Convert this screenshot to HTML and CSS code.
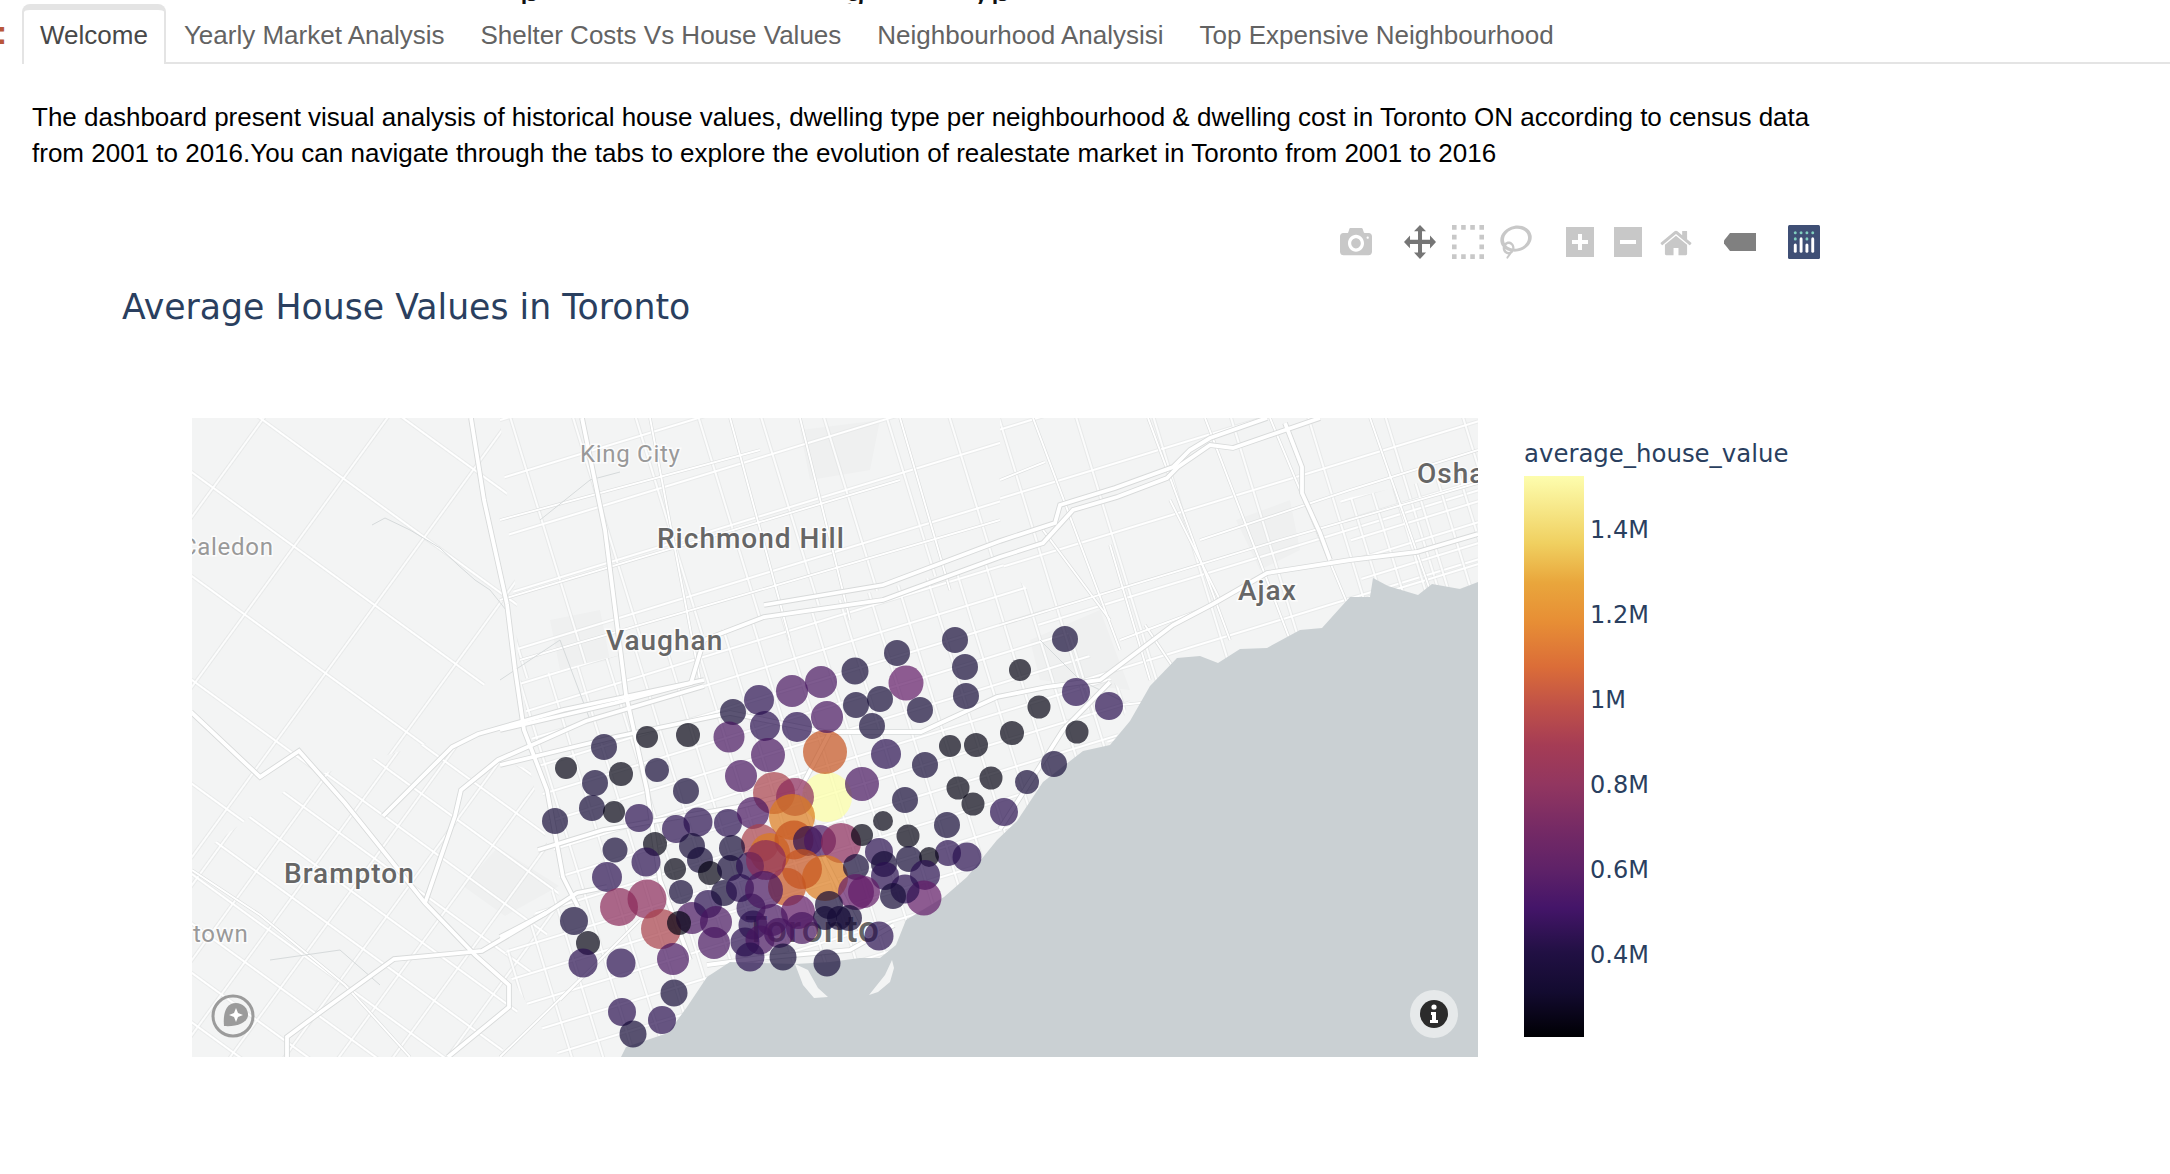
FILE: index.html
```html
<!DOCTYPE html>
<html lang="en">
<head>
<meta charset="utf-8">
<title>Toronto Dashboard</title>
<link rel="stylesheet" href="styles.css">
</head>
<body>
<div class="cut-heading"><span class="g1">p</span><span class="g2">g</span><span class="g3">y</span><span class="g4">p</span></div>
<nav class="tabs">
  <span class="edge-mark">:</span>
  <a class="tab active">Welcome</a>
  <a class="tab">Yearly Market Analysis</a>
  <a class="tab">Shelter Costs Vs House Values</a>
  <a class="tab">Neighbourhood Analysisi</a>
  <a class="tab">Top Expensive Neighbourhood</a>
</nav>
<p class="intro">The dashboard present visual analysis of historical house values, dwelling type per neighbourhood &amp; dwelling cost in Toronto ON according to census data from 2001 to 2016.You can navigate through the tabs to explore the evolution of realestate market in Toronto from 2001 to 2016</p>
<div class="toolbar">
  <div class="tb-group">
    <svg class="tb idle" viewBox="0 -50 1000 1000" preserveAspectRatio="none"><path transform="matrix(1 0 0 -1 0 788)" d="m500 450c-83 0-150-67-150-150 0-83 67-150 150-150 83 0 150 67 150 150 0 83-67 150-150 150z m400 150h-120c-16 0-34 13-39 29l-31 93c-6 15-23 28-40 28h-340c-16 0-34-13-39-28l-31-94c-6-15-23-28-40-28h-120c-55 0-100-45-100-100v-450c0-55 45-100 100-100h800c55 0 100 45 100 100v450c0 55-45 100-100 100z m-400-550c-138 0-250 112-250 250 0 138 112 250 250 250 138 0 250-112 250-250 0-138-112-250-250-250z m365 380c-19 0-35 16-35 35 0 19 16 35 35 35 19 0 35-16 35-35 0-19-16-35-35-35z"/></svg>
  </div>
  <div class="tb-group">
    <svg class="tb on" viewBox="0 -150 1000 1000" preserveAspectRatio="none"><path transform="matrix(1 0 0 -1 0 700)" d="m1000 350l-187 188 0-125-250 0 0 250 125 0-188 187-187-187 125 0 0-250-250 0 0 125-188-188 186-187 0 125 252 0 0-250-125 0 187-188 188 188-125 0 0 250 250 0 0-126 187 188z"/></svg>
    <svg class="tb idle" viewBox="0 0 1000 1000" preserveAspectRatio="none"><path transform="matrix(1 0 0 -1 0 850)" d="m0 850l0-143 143 0 0 143-143 0z m286 0l0-143 143 0 0 143-143 0z m285 0l0-143 143 0 0 143-143 0z m286 0l0-143 143 0 0 143-143 0z m-857-286l0-143 143 0 0 143-143 0z m857 0l0-143 143 0 0 143-143 0z m-857-285l0-143 143 0 0 143-143 0z m857 0l0-143 143 0 0 143-143 0z m-857-286l0-143 143 0 0 143-143 0z m286 0l0-143 143 0 0 143-143 0z m285 0l0-143 143 0 0 143-143 0z m286 0l0-143 143 0 0 143-143 0z"/></svg>
    <svg class="tb idle" viewBox="0 -150 1031 1000" preserveAspectRatio="none"><path transform="matrix(1 0 0 -1 0 700)" d="m1018 538c-36 207-290 336-568 286-277-48-473-256-436-463 10-57 36-108 76-151-13-66 11-137 68-183 34-28 75-41 114-42l-55-70 0 0c-2-1-3-2-4-3-10-14-8-34 5-45 14-11 34-8 45 4 1 1 2 3 2 5l0 0 113 140c16 11 31 24 45 40 4 3 6 7 8 11 48-3 100 0 151 9 278 48 473 255 436 462z m-624-379c-80 14-149 48-197 96 42 42 109 47 156 9 33-26 47-66 41-105z m-187-74c-19 16-33 37-39 60 50-32 109-55 174-68-42-25-95-24-135 8z m360 75c-34-7-69-9-102-8 8 62-16 128-68 170-73 59-175 54-244-5-9 20-16 40-20 61-28 159 121 317 333 354s407-60 434-217c28-159-121-318-333-355z"/></svg>
  </div>
  <div class="tb-group">
    <svg class="tb idle" viewBox="0 0 32 34"><path fill-rule="evenodd" d="M2 2H30V32H2Z M14 9V15H8V19H14V25H18V19H24V15H18V9Z"/></svg>
    <svg class="tb idle" viewBox="0 0 32 34"><path fill-rule="evenodd" d="M2 2H30V32H2Z M8 15V19H24V15Z"/></svg>
    <svg class="tb idle" viewBox="0 0 928.6 1000" preserveAspectRatio="none"><path transform="matrix(1 0 0 -1 0 880)" d="m786 296v-267q0-15-11-26t-25-10h-214v214h-143v-214h-214q-15 0-25 10t-11 26v267q0 1 0 2t0 2l321 264 321-264q1-1 1-4z m124 39l-34-41q-5-5-12-6h-2q-7 0-12 3l-386 322-386-322q-7-4-13-4-7 2-12 7l-35 41q-4 5-3 13t6 12l401 334q18 15 42 15t43-15l136-114v109q0 8 5 13t13 5h107q8 0 13-5t5-13v-227l122-102q5-5 6-12t-4-13z"/></svg>
  </div>
  <div class="tb-group">
    <svg class="tb tag" viewBox="0 0 32 34"><path d="M6 8H32V26H6L0 18.5V15.5Z"/></svg>
  </div>
  <div class="tb-group">
    <svg class="tb" viewBox="0 0 132 132" preserveAspectRatio="none"><rect class="logo-bg" width="132" height="132" rx="6"/><g class="logo-dots"><circle cx="78" cy="54" r="6"/><circle cx="102" cy="30" r="6"/><circle cx="78" cy="30" r="6"/><circle cx="54" cy="30" r="6"/><circle cx="30" cy="30" r="6"/><circle cx="30" cy="54" r="6"/></g><g class="logo-bars"><path d="M30,72a6,6,0,0,0-6,6v24a6,6,0,0,0,12,0V78A6,6,0,0,0,30,72Z"/><path d="M78,72a6,6,0,0,0-6,6v24a6,6,0,0,0,12,0V78A6,6,0,0,0,78,72Z"/><path d="M54,48a6,6,0,0,0-6,6v48a6,6,0,0,0,12,0V54A6,6,0,0,0,54,48Z"/><path d="M102,48a6,6,0,0,0-6,6v48a6,6,0,0,0,12,0V54A6,6,0,0,0,102,48Z"/></g></svg>
  </div>
</div>
<h2 class="plot-title">Average House Values in Toronto</h2>
<section class="plot">
<svg class="map" viewBox="192 418 1286 639">
  <defs>
    <pattern id="pw1" width="100" height="84" patternUnits="userSpaceOnUse" patternTransform="rotate(36 192 418)"><path class="gc" d="M0 42H100M50 0V84"/><path class="gf" d="M0 42H100M50 0V84"/></pattern>
    <pattern id="pw2" width="44" height="40" patternUnits="userSpaceOnUse" patternTransform="rotate(36 192 800)"><path class="gc" d="M0 20H44M22 0V40"/><path class="gf" d="M0 20H44M22 0V40"/></pattern>
    <pattern id="pn" width="60" height="56" patternUnits="userSpaceOnUse" patternTransform="rotate(-17 500 418)"><path class="gc" d="M0 28H60M30 0V56"/><path class="gf" d="M0 28H60M30 0V56"/></pattern>
    <pattern id="pc" width="30" height="28" patternUnits="userSpaceOnUse" patternTransform="rotate(-17 500 600)"><path class="gc" d="M0 14H30M15 0V28"/><path class="gf" d="M0 14H30M15 0V28"/></pattern>
    <pattern id="pe" width="74" height="66" patternUnits="userSpaceOnUse" patternTransform="rotate(-17 1000 418)"><path class="gc" d="M0 33H74M37 0V66"/><path class="gf" d="M0 33H74M37 0V66"/></pattern>
    <pattern id="po" width="22" height="20" patternUnits="userSpaceOnUse" patternTransform="rotate(-17 1380 500)"><path class="gc" d="M0 10H22M11 0V20"/><path class="gf" d="M0 10H22M11 0V20"/></pattern>
    <g id="majors">
      <path d="M191 712L260 777L299 751L345 803L425 903L475 955L509 985L509 1007L448 1057"/>
      <path d="M287 1057L287 1037L322 1011L394 959L482 951L546 913L577 893L607 887"/>
      <path d="M425 903L455 816L461 790L498 760L586 721L704 686"/>
      <path d="M383 816L452 747L478 734L563 710L704 680"/>
      <path d="M500 730L615 703L691 683L704 640L764 617L883 600L1000 557L1043 543L1073 510L1117 497L1167 478L1178 467L1210 445L1233 448L1320 418"/>
      <path d="M764 605L883 585L1000 541L1055 523L1060 505L1115 488L1173 467L1190 450L1210 438L1267 418"/>
      <path d="M500 765L615 737L730 713L825 732L921 732L997 697L1047 687L1100 680L1173 625L1213 604L1267 573L1350 560L1417 552L1478 534"/>
      <path d="M1000 829L1063 730L1110 682"/>
      <path d="M538 850L603 830L737 807L806 790"/>
      <path d="M582 418L605 530L626 695L647 790L660 880L690 960"/>
      <path d="M507 604L515 669L524 730L547 790L563 877L578 907"/>
      <path d="M471 418L484 500L507 604"/>
      <path d="M1285 423L1302 467L1302 493L1320 533L1330 560"/>
      <path d="M830 732L800 790L825 860L860 930"/>
      <path d="M500 937L546 913"/>
      <path d="M707 965L760 958L850 950L894 925"/>
    </g>
    <g id="minors">
      <path d="M1033 418L1120 650M1148 418L1230 640M1205 418L1290 640M1270 418L1350 610M1370 418L1430 590"/>
      <path d="M1000 480L1045 462M1043 530L1110 620M1110 545L1150 680M1170 500L1220 600"/>
      <path d="M1000 625L1280 540L1478 483M1120 640L1200 610"/>
      <path d="M1200 540L1350 490L1478 450"/>
      <path d="M650 418L700 680M730 418L790 640M800 418L850 620M900 418L950 590"/>
      <path d="M500 520L760 450M500 600L900 480M520 660L1000 520"/>
      <path d="M192 870L260 915L345 985L410 1057"/>
      <path d="M560 1000L640 920M500 1057L600 960"/>
      <path d="M1120 705L1170 700M1145 625L1195 700"/>
    </g>
  </defs>
  <rect class="land" x="192" y="418" width="1286" height="639"/>
  <path class="park" d="M463 886L498 847L559 886L505 916ZM1030 640L1100 610L1130 690L1040 680ZM550 620L600 610L610 660L560 670ZM1236 520L1290 500L1300 550L1260 570ZM800 430L880 420L870 470L810 480Z"/>
  <polygon fill="url(#pw1)" points="192,418 500,418 520,640 440,740 300,780 192,860"/>
  <polygon fill="url(#pw2)" points="192,860 300,780 440,740 530,770 560,900 500,1057 192,1057"/>
  <polygon fill="url(#pn)" points="500,418 1000,418 1000,560 520,680"/>
  <polygon fill="url(#pc)" points="520,680 1000,560 1130,700 1000,1057 560,1057 500,960 560,880"/>
  <polygon fill="url(#pe)" points="1000,418 1478,418 1478,640 1130,780 1000,560"/>
  <polygon fill="url(#po)" points="1340,500 1478,470 1478,590 1370,610"/>
  <use href="#minors" class="case-minor"/>
  <use href="#minors" class="fill-minor"/>
  <path class="creek" d="M372 525L385 518L410 530L440 548L458 565L475 580L490 590L510 615M540 520L590 480L620 472M500 680L560 640L590 720M270 960L340 950L380 985M1040 640L1080 680L1120 700"/>
  <use href="#majors" class="case-major"/>
  <use href="#majors" class="fill-major"/>
  <path class="water" d="M1478 582L1460 589L1432 584L1418 595L1388 586L1373 578L1370 597L1350 597L1340 608L1322 628L1300 630L1267 648L1240 649L1218 663L1200 656L1177 658L1150 686L1130 721L1110 745L1083 751L1043 782L1017 821L997 840L967 877L944 897L906 920L896 945L880 958L860 958L830 962L795 964L730 962L707 977L687 1007L668 1033L626 1047L621 1057H1478Z"/>
  <path class="island" d="M795 964L803 985L814 998L828 997L818 988L808 970ZM892 960L885 975L869 995L878 992L890 982L894 968Z"/>
  <g class="labels">
    <text class="faint" x="580" y="462">King City</text>
    <text class="mid" x="657" y="548">Richmond Hill</text>
    <text class="faint" x="181" y="555">Caledon</text>
    <text class="mid" x="606" y="650">Vaughan</text>
    <text class="mid" x="284" y="883">Brampton</text>
    <text class="faint" x="193" y="942">town</text>
    <text class="big" x="745" y="942">Toronto</text>
    <text class="mid" x="1238" y="600">Ajax</text>
    <text class="mid" x="1417" y="483">Oshawa</text>
  </g>
  <g class="pts">
    <circle class="y" cx="827" cy="797" r="25"/>
    <circle class="r" cx="774" cy="793" r="21"/>
    <circle class="p" cx="795" cy="797" r="19"/>
    <circle class="o" cx="792" cy="817" r="23"/>
    <circle class="h" cx="825" cy="752" r="22"/>
    <circle class="d" cx="862" cy="784" r="17"/>
    <circle class="b" cx="1065" cy="639" r="13"/><circle class="b" cx="955" cy="640" r="13"/><circle class="b" cx="897" cy="653" r="13"/><circle class="b" cx="965" cy="667" r="13"/><circle class="a" cx="1020" cy="670" r="11"/><circle class="b" cx="855" cy="671" r="13.5"/><circle class="d" cx="821" cy="682" r="16"/><circle class="e" cx="906" cy="683" r="17.5"/><circle class="d" cx="792" cy="691" r="16"/><circle class="b" cx="966" cy="696" r="13"/><circle class="c" cx="1076" cy="692" r="14"/><circle class="c" cx="759" cy="700" r="15"/><circle class="b" cx="733" cy="712" r="13"/><circle class="b" cx="880" cy="699" r="13"/><circle class="b" cx="856" cy="705" r="13"/><circle class="b" cx="920" cy="710" r="13"/><circle class="a" cx="1039" cy="707" r="11.5"/><circle class="c" cx="1109" cy="706" r="14"/><circle class="d" cx="827" cy="717" r="16"/><circle class="c" cx="797" cy="727" r="15"/><circle class="c" cx="765" cy="726" r="15"/><circle class="b" cx="872" cy="726" r="13"/><circle class="d" cx="729" cy="737" r="15.5"/><circle class="a" cx="1012" cy="733" r="12"/><circle class="a" cx="1077" cy="732" r="11.5"/><circle class="a" cx="950" cy="746" r="11"/><circle class="a" cx="976" cy="745" r="12"/><circle class="d" cx="768" cy="755" r="17"/><circle class="c" cx="886" cy="754" r="15"/><circle class="b" cx="925" cy="765" r="13"/>
    <circle class="b" cx="604" cy="747" r="13"/><circle class="a" cx="647" cy="737" r="11"/><circle class="a" cx="688" cy="735" r="12"/><circle class="a" cx="566" cy="768" r="11"/><circle class="a" cx="621" cy="774" r="12"/><circle class="b" cx="657" cy="770" r="12"/><circle class="b" cx="595" cy="783" r="13"/><circle class="b" cx="686" cy="791" r="13"/><circle class="d" cx="741" cy="776" r="16"/><circle class="a" cx="958" cy="788" r="11.5"/><circle class="a" cx="991" cy="778" r="11.5"/><circle class="b" cx="1027" cy="782" r="12"/><circle class="b" cx="1054" cy="764" r="13"/><circle class="a" cx="973" cy="804" r="11.5"/><circle class="b" cx="905" cy="800" r="13"/><circle class="c" cx="1004" cy="812" r="14"/><circle class="b" cx="555" cy="821" r="13"/><circle class="b" cx="592" cy="808" r="13"/><circle class="a" cx="614" cy="812" r="11"/><circle class="c" cx="639" cy="818" r="14"/><circle class="c" cx="676" cy="829" r="14"/><circle class="c" cx="698" cy="822" r="14.5"/><circle class="c" cx="728" cy="823" r="14"/><circle class="d" cx="753" cy="813" r="16"/><circle class="a" cx="883" cy="821" r="10"/><circle class="b" cx="947" cy="825" r="13"/>
    <circle class="r" cx="760" cy="843" r="19"/><circle class="o" cx="770" cy="853" r="20"/><circle class="h" cx="794" cy="840" r="19.5"/><circle class="c" cx="808" cy="841" r="15"/><circle class="d" cx="820" cy="841" r="16"/><circle class="p" cx="841" cy="843" r="20"/><circle class="o" cx="825" cy="878" r="23"/><circle class="h" cx="802" cy="869" r="20"/><circle class="h" cx="787" cy="887" r="19"/>
    <circle class="a" cx="862" cy="835" r="11"/><circle class="a" cx="908" cy="836" r="11.5"/><circle class="b" cx="615" cy="850" r="12.5"/><circle class="a" cx="655" cy="844" r="12"/><circle class="b" cx="692" cy="846" r="13"/><circle class="b" cx="732" cy="848" r="13"/><circle class="c" cx="646" cy="862" r="14.5"/><circle class="c" cx="607" cy="877" r="15"/><circle class="a" cx="675" cy="869" r="11"/><circle class="b" cx="700" cy="860" r="13"/><circle class="a" cx="710" cy="873" r="12"/><circle class="b" cx="730" cy="868" r="13"/><circle class="c" cx="750" cy="866" r="14"/><circle class="p" cx="766" cy="860" r="20"/><circle class="b" cx="856" cy="867" r="13"/><circle class="c" cx="879" cy="852" r="14"/><circle class="b" cx="884" cy="864" r="13"/><circle class="c" cx="885" cy="876" r="14"/><circle class="b" cx="909" cy="859" r="13"/><circle class="c" cx="948" cy="853" r="13"/><circle class="c" cx="967" cy="857" r="14.5"/><circle class="a" cx="929" cy="857" r="10"/><circle class="c" cx="925" cy="875" r="15"/><circle class="e" cx="924" cy="898" r="17.5"/><circle class="c" cx="905" cy="889" r="14.5"/><circle class="b" cx="893" cy="896" r="13"/><circle class="e" cx="864" cy="892" r="16"/><circle class="e" cx="856" cy="892" r="18"/>
    <circle class="p" cx="619" cy="907" r="19"/><circle class="p" cx="647" cy="899" r="19.5"/><circle class="r" cx="661" cy="929" r="20"/><circle class="b" cx="681" cy="892" r="12"/><circle class="b" cx="574" cy="921" r="14"/><circle class="a" cx="588" cy="943" r="12"/><circle class="c" cx="583" cy="963" r="14.5"/><circle class="c" cx="621" cy="963" r="14.5"/><circle class="d" cx="673" cy="959" r="16"/><circle class="d" cx="692" cy="918" r="16"/><circle class="a" cx="679" cy="923" r="12"/><circle class="c" cx="708" cy="904" r="14"/><circle class="b" cx="724" cy="893" r="13"/><circle class="d" cx="716" cy="922" r="16"/><circle class="d" cx="714" cy="943" r="16"/><circle class="c" cx="740" cy="888" r="14"/><circle class="c" cx="751" cy="908" r="14.5"/><circle class="d" cx="764" cy="890" r="19"/><circle class="e" cx="798" cy="912" r="17"/><circle class="b" cx="829" cy="905" r="14"/><circle class="c" cx="753" cy="925" r="14.5"/><circle class="d" cx="772" cy="920" r="16"/><circle class="b" cx="825" cy="918" r="12"/><circle class="b" cx="849" cy="918" r="13"/><circle class="b" cx="839" cy="918" r="12"/><circle class="d" cx="802" cy="928" r="16"/><circle class="d" cx="779" cy="933" r="15"/><circle class="c" cx="745" cy="942" r="14.5"/><circle class="d" cx="760" cy="940" r="14.5"/><circle class="c" cx="879" cy="936" r="14.5"/><circle class="c" cx="750" cy="957" r="14.5"/><circle class="b" cx="783" cy="957" r="13.5"/><circle class="b" cx="827" cy="963" r="13.5"/><circle class="b" cx="674" cy="993" r="13.5"/><circle class="c" cx="622" cy="1012" r="14"/><circle class="c" cx="662" cy="1020" r="14"/><circle class="b" cx="633" cy="1034" r="13.5"/>
  </g>
  <g class="map-logo">
    <circle class="ml-ring" cx="233" cy="1016" r="20"/>
    <path class="ml-drop" d="M224 1026C223 1015 225 1003 236 1003A12 12 0 0 1 248 1015C248 1023 236 1027 224 1026Z"/>
    <path class="ml-star" d="M236 1008L238 1013L243 1015L238 1017L236 1022L234 1017L229 1015L234 1013Z"/>
  </g>
  <g class="map-info">
    <ellipse class="mi-bg" cx="1434" cy="1014" rx="24" ry="24"/>
    <circle class="mi-dot" cx="1434" cy="1014" r="14"/>
    <circle class="mi-i" cx="1434" cy="1007" r="2.6"/>
    <path class="mi-i" d="M1431 1012H1436V1020H1438V1023H1430V1020H1432V1015H1431Z"/>
  </g>
</svg>
<aside class="legend">
  <div class="legend-title">average_house_value</div>
  <div class="legend-body">
    <div class="legend-bar"></div>
    <ul class="ticks">
      <li>1.4M</li><li>1.2M</li><li>1M</li><li>0.8M</li><li>0.6M</li><li>0.4M</li>
    </ul>
  </div>
</aside>
</section>
</body>
</html>
```
FILE: styles.css
```css
* { box-sizing: border-box; }
html, body { margin: 0; padding: 0; background: #fff; }
body { width: 2170px; height: 1174px; overflow: hidden; font-family: "Liberation Sans", Arial, sans-serif; }

.cut-heading { display: flex; height: 4px; overflow: hidden; font: 400 36px/4px "Liberation Sans", sans-serif; color: #111; }
.cut-heading span { display: block; margin-top: -13px; }
.g1 { margin-left: 520px; }
.g2 { margin-left: 305px; }
.g3 { margin-left: 107px; }
.g4 { margin-left: 1px; }

.tabs { display: flex; height: 60px; }
.edge-mark { width: 22px; font: 700 34px/56px "Liberation Sans", sans-serif; color: #b9573a; margin-left: -4px; margin-right: 4px; }
.tabs::after { content: ""; flex: 1; border-bottom: 2px solid #e4e4e4; }
.tab { display: block; padding: 6px 18px 0; font-size: 26px; line-height: 50px; color: #636363; white-space: nowrap; border-bottom: 2px solid #e4e4e4; }
.tab.active { color: #484848; padding: 0 16px; border: 2px solid #e4e4e4; border-top-width: 6px; border-bottom: 0; border-radius: 8px 8px 0 0; }

.intro { margin: 36px 0 0 32px; width: 1790px; font-size: 26px; line-height: 35.5px; color: #000; }

.toolbar { display: flex; gap: 32px; margin: 54px 0 0 1340px; height: 34px; }
.tb-group { display: flex; gap: 16px; }
.tb { display: block; width: 32px; height: 34px; }
.idle path { fill: #c8c8c8; }
.on path { fill: #767676; }
.tag path { fill: #808080; }
.logo-bg { fill: #3f4f75; }
.logo-dots { fill: #80cfbe; }
.logo-bars { fill: #fff; }

.plot-title { margin: 25px 0 0 122px; height: 46px; font: 400 34.7px/46px "DejaVu Sans", Verdana, sans-serif; color: #2a3f5f; white-space: nowrap; }

.plot { display: flex; margin: 88px 0 0 192px; }
.map { display: block; width: 1286px; height: 639px; flex: none; }
.land { fill: #f3f4f4; }
.park { fill: #eff0f0; }
.island { fill: #f3f4f4; }
.gc { stroke: #dfe1e1; stroke-width: 3.2; fill: none; }
.gf { stroke: #fff; stroke-width: 1.8; fill: none; }
.case-minor { fill: none; stroke: #dcdede; stroke-width: 3.2; }
.fill-minor { fill: none; stroke: #fff; stroke-width: 1.9; }
.case-major { fill: none; stroke: #d8dada; stroke-width: 5.6; }
.fill-major { fill: none; stroke: #fff; stroke-width: 3.8; }
.creek { fill: none; stroke: #d6dadb; stroke-width: 1; }
.water { fill: #cad0d3; }

.labels text { font-family: Roboto, "Noto Sans", sans-serif; paint-order: stroke; stroke: #fff; stroke-width: 3px; stroke-opacity: .75; letter-spacing: 1px; }
.labels .mid { font-size: 28px; font-weight: 500; fill: #666; }
.labels .big { font-size: 37px; font-weight: 500; fill: #666; }
.labels .faint { font-size: 24px; fill: #999; letter-spacing: .7px; }

.pts circle { fill-opacity: .7; }
.a { fill: #050414; }
.b { fill: #150b38; }
.c { fill: #2a1050; }
.d { fill: #47165f; }
.e { fill: #611a66; }
.p { fill: #8a2a5a; }
.r { fill: #a8404a; }
.h { fill: #c5521f; }
.o { fill: #dc7a1c; }
.y { fill: #fcffa4; }

.ml-ring { fill: none; stroke: #9b9b9b; stroke-width: 3; }
.ml-drop { fill: #9b9b9b; }
.ml-star { fill: #fff; }
.mi-bg { fill: #e6e9ea; }
.mi-dot { fill: #2b2b2b; }
.mi-i { fill: #fff; }

.legend { margin-left: 46px; margin-top: 20px; flex: none; color: #2a3f5f; font-family: "DejaVu Sans", Verdana, sans-serif; }
.legend-title { font-size: 24.4px; line-height: 32px; margin-bottom: 6px; white-space: nowrap; }
.legend-body { display: flex; height: 561px; }
.legend-bar { width: 60px; height: 561px; background: linear-gradient(to bottom, #fdfdae 0%, #f0d060 12%, #e9a63c 19%, #e78e35 26%, #db6d38 34%, #c05148 41%, #a53c55 48%, #923660 55%, #752a65 63%, #5f2268 70%, #441569 77%, #211043 85%, #130b30 92%, #000004 100%); }
.ticks { list-style: none; margin: 12px 0 0 6px; padding: 0; font-size: 24px; }
.ticks li { height: 85px; line-height: 85px; }
```
